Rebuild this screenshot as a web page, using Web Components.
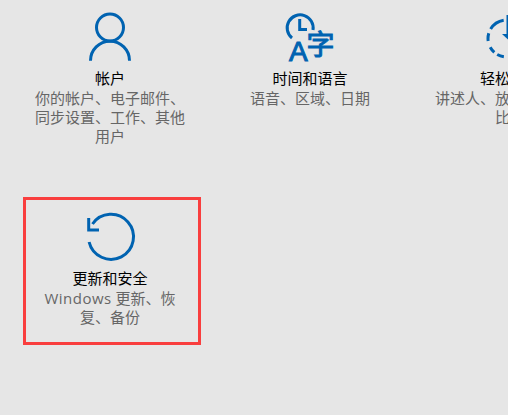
<!DOCTYPE html>
<html>
<head>
<meta charset="utf-8">
<style>
html, body { margin: 0; height: 100%; overflow: hidden; background: #e6e6e6; }
.latin { letter-spacing: 0.5px; }
</style>
</head>
<body>
<settings-grid>
  <settings-tile heading="帐户">你的帐户、电子邮件、同步设置、工作、其他用户
    <svg slot="icon" width="60" height="50" viewBox="0 0 60 50" fill="none" stroke="#0063b1" stroke-width="3">
      <circle cx="30" cy="14.500" r="13.500"/>
      <path d="M10.500 47.700a19.500 19.500 0 0 1 39 0"/>
    </svg>
  </settings-tile>
  <settings-tile heading="时间和语言">语音、区域、日期
    <svg slot="icon" width="60" height="50" viewBox="0 0 60 50" fill="none" stroke="#0063b1" stroke-width="3">
      <path d="M12 25A13 13 0 1 1 33 17"/>
      <path d="M19.700 6V16.500H27"/>
      <text x="9" y="47.700" font-family="Liberation Sans" font-size="28" fill="#0063b1" stroke="#0063b1" stroke-width="1">A</text>
      <text x="26.500" y="42" font-family="Noto Sans CJK SC" font-size="28" fill="#0063b1" stroke="#0063b1" stroke-width="1">字</text>
    </svg>
  </settings-tile>
  <settings-tile heading="轻松使用">讲述人、放大镜、高对比度
    <svg slot="icon" width="60" height="50" viewBox="0 0 60 50" fill="none" stroke="#0063b1" stroke-width="3">
      <circle cx="26.500" cy="25.500" r="18.500" stroke-dasharray="7 3.500 6.500 6.500 8 4.600 16 64.100" stroke-dashoffset="-31.600"/>
      <path d="M28 2V24"/>
      <path d="M22 21l6 5.500 6-5.500z" fill="#0063b1" stroke="none"/>
    </svg>
  </settings-tile>
  <settings-tile heading="更新和安全" marked><span class="latin">Windows</span> 更新、恢复、备份
    <svg slot="icon" width="60" height="50" viewBox="0 0 60 50" fill="none" stroke="#0063b1" stroke-width="3">
      <path d="M12.500 11A22.500 22.500 0 1 1 9.100 29"/>
      <path d="M8.700 5V17H19"/>
    </svg>
  </settings-tile>
</settings-grid>
<script>
class SettingsGrid extends HTMLElement {
    constructor(){
        super();
        this.shadowDOM = this.attachShadow({mode: "open"});
        this.shadowDOM.innerHTML = `
            <style>
            :host {
                display: grid;
                grid-template-columns: repeat(3, 200px);
                grid-auto-rows: 200px;
                padding: 10px 0 0 10px;
                width: 620px;
                font-family: "Open Sans", "Noto Sans CJK SC", sans-serif;
            }
            </style>
            <slot></slot>`;
    }
}

class SettingsTile extends HTMLElement {
    constructor(){
        super();
        this.shadowDOM = this.attachShadow({mode: "open"});
    }

    connectedCallback(){
        this.render();
    }

    render(){
        this.shadowDOM.innerHTML = `
            <style>
            :host {
                display: flex;
                flex-direction: column;
                align-items: center;
                position: relative;
            }
            :host([marked])::after {
                content: "";
                position: absolute;
                left: 13px;
                top: -13px;
                width: 172px;
                height: 142px;
                border: 3px solid #f93e3e;
            }
            .icon { height: 50px; margin-top: 3px; }
            ::slotted(svg) { overflow: visible; }
            h2 {
                margin: 6px 0 0;
                font-size: 15px;
                line-height: 19px;
                font-weight: 400;
                color: #000;
            }
            p {
                margin: 1px 0 0;
                width: 150px;
                font-size: 15px;
                line-height: 19px;
                color: #666;
                text-align: center;
            }
            </style>
            <div class="icon"><slot name="icon"></slot></div>
            <h2>${this.getAttribute("heading")}</h2>
            <p><slot></slot></p>`;
    }
}

customElements.define("settings-grid", SettingsGrid);
customElements.define("settings-tile", SettingsTile);
</script>
</body>
</html>
